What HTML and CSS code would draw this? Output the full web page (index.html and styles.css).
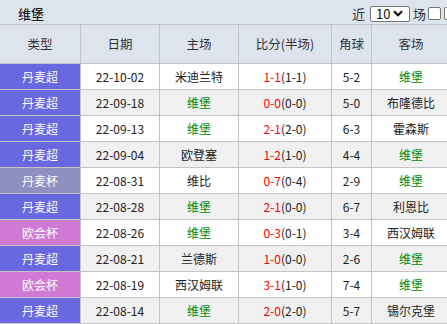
FILE: index.html
```html
<!DOCTYPE html>
<html lang="zh">
<head>
<meta charset="utf-8">
<link rel="stylesheet" href="styles.css">
</head>
<body>
<div class="titlebar">
  <span class="team">维堡</span>
  <div class="filter">
    <span class="lbl near">近</span>
    <span class="sel"><span class="selv">10</span><svg class="chev" width="10" height="7" viewBox="0 0 10 7"><path d="M1 1.2 L5 5.2 L9 1.2" fill="none" stroke="#111" stroke-width="2.2"/></svg></span>
    <span class="lbl games">场</span>
    <span class="chk"></span>
    <span class="chk"></span>
  </div>
</div>
<div class="tbl">
  <div class="th">类型</div><div class="th">日期</div><div class="th">主场</div><div class="th">比分(半场)</div><div class="th">角球</div><div class="th">客场</div>

  <div class="td lg sl">丹麦超</div><div class="td">22-10-02</div><div class="td">米迪兰特</div><div class="td"><span class="r">1-1</span>(1-1)</div><div class="td">5-2</div><div class="td g">维堡</div>

  <div class="td lg sl">丹麦超</div><div class="td alt">22-09-18</div><div class="td alt g">维堡</div><div class="td alt"><span class="r">0-0</span>(0-0)</div><div class="td alt">5-0</div><div class="td alt">布隆德比</div>

  <div class="td lg sl">丹麦超</div><div class="td">22-09-13</div><div class="td g">维堡</div><div class="td"><span class="r">2-1</span>(2-0)</div><div class="td">6-3</div><div class="td">霍森斯</div>

  <div class="td lg sl">丹麦超</div><div class="td alt">22-09-04</div><div class="td alt">欧登塞</div><div class="td alt"><span class="r">1-2</span>(1-0)</div><div class="td alt">4-4</div><div class="td alt g">维堡</div>

  <div class="td lg cup">丹麦杯</div><div class="td">22-08-31</div><div class="td">维比</div><div class="td"><span class="r">0-7</span>(0-4)</div><div class="td">2-9</div><div class="td g">维堡</div>

  <div class="td lg sl">丹麦超</div><div class="td alt">22-08-28</div><div class="td alt g">维堡</div><div class="td alt"><span class="r">2-1</span>(0-0)</div><div class="td alt">6-7</div><div class="td alt">利恩比</div>

  <div class="td lg ec">欧会杯</div><div class="td">22-08-26</div><div class="td g">维堡</div><div class="td"><span class="r">0-3</span>(0-1)</div><div class="td">3-4</div><div class="td">西汉姆联</div>

  <div class="td lg sl">丹麦超</div><div class="td alt">22-08-21</div><div class="td alt">兰德斯</div><div class="td alt"><span class="r">1-0</span>(0-0)</div><div class="td alt">2-6</div><div class="td alt g">维堡</div>

  <div class="td lg ec">欧会杯</div><div class="td">22-08-19</div><div class="td">西汉姆联</div><div class="td"><span class="r">3-1</span>(1-0)</div><div class="td">7-4</div><div class="td g">维堡</div>

  <div class="td lg sl">丹麦超</div><div class="td alt">22-08-14</div><div class="td alt g">维堡</div><div class="td alt"><span class="r">2-0</span>(2-0)</div><div class="td alt">5-7</div><div class="td alt">锡尔克堡</div>
</div>
</body>
</html>
```
FILE: styles.css
```css
html, body {
  margin: 0;
  padding: 0;
  overflow: hidden;
  width: 447px;
  height: 324px;
  background: #ffffff;
  font-family: "Noto Sans CJK SC", "Noto Sans", sans-serif;
  color: #333;
}
.titlebar {
  height: 24px;
  background: #dde4ee;
  display: flex;
  align-items: center;
  justify-content: space-between;
  padding: 3px 0 0 18px;
  box-sizing: border-box;
  white-space: nowrap;
}
.team {
  font-size: 13px;
  line-height: 16px;
  color: #222;
  font-weight: 500;
}
.filter {
  display: flex;
  align-items: center;
  font-size: 13px;
  line-height: 16px;
  color: #333;
  margin-right: -10px;
}
.near { margin-right: 5px; }
.games { margin-right: 2px; }
.sel {
  box-sizing: border-box;
  width: 40px;
  height: 16px;
  border: 1px solid #767676;
  border-radius: 2px;
  background: #fff;
  display: flex;
  align-items: center;
  padding-left: 5px;
  margin-right: 3px;
  color: #111;
}
.selv { font-size: 13px; line-height: 14px; width: 17px; }
.chev { display: block; }
.chk {
  box-sizing: border-box;
  width: 13px;
  height: 13px;
  border: 1px solid #767676;
  border-radius: 2px;
  background: #fff;
  margin-right: 3px;
}
.chk:last-child { margin-right: 0; }
.tbl {
  display: grid;
  width: 450px;
  grid-template-columns: 80px 78px 78px 92px 39px 78px;
  grid-template-rows: 38px repeat(10, 25px);
  gap: 1px;
  background: #c4c4c4;
  border-top: 1px solid #c4c4c4;
  border-bottom: 1px solid #c4c4c4;
  font-size: 12px;
}
.th, .td {
  display: flex;
  align-items: center;
  justify-content: center;
  line-height: 14px;
  white-space: nowrap;
}
.th {
  background: #dde4ee;
  color: #333;
  font-size: 12.5px;
}
.td { background: #ffffff; color: #222; }
.td.alt { background: #f0f0f0; }
.td.lg { color: #ffffff; }
.td.sl { background: #6868e0; }
.td.cup { background: #9090c0; }
.td.ec { background: #d07ad6; }
.g { color: #008800 !important; }
.r { color: #ff0000; }
```
